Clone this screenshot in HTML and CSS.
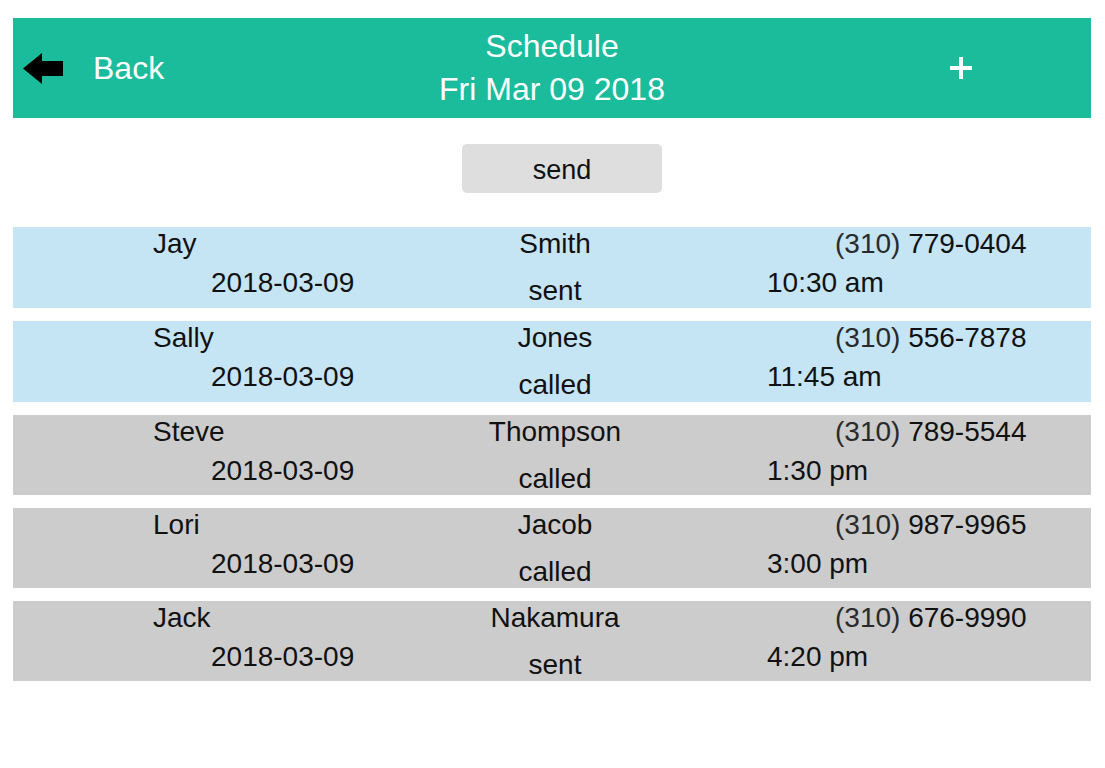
FILE: index.html
```html
<!DOCTYPE html>
<html>
<head>
<meta charset="utf-8">
<title>Schedule</title>
<link rel="stylesheet" href="styles.css">
</head>
<body>
<div class="app">
  <header class="topbar">
    <div class="back">
      <svg class="back-arrow" width="40" height="31" viewBox="0 0 40 31"><polygon points="0,15.5 19,0 19,8 40,8 40,23 19,23 19,31" fill="#000"/></svg>
      <span class="back-label">Back</span>
    </div>
    <div class="title">
      <div>Schedule</div>
      <div>Fri Mar 09 2018</div>
    </div>
    <div class="actions">
      <svg class="plus" width="22" height="22" viewBox="0 0 22 22"><rect x="9" y="0" width="4" height="22" fill="#fff"/><rect x="0" y="9" width="22" height="4" fill="#fff"/></svg>
    </div>
  </header>

  <div class="send-wrap">
    <button class="send">send</button>
  </div>

  <div class="list">
    <div class="row blue">
      <div class="first">Jay</div><div class="last">Smith</div><div class="phone"><span class="area">(310)</span> 779-0404</div>
      <div class="date">2018-03-09</div><div class="status">sent</div><div class="time">10:30 am</div>
    </div>
    <div class="row blue">
      <div class="first">Sally</div><div class="last">Jones</div><div class="phone"><span class="area">(310)</span> 556-7878</div>
      <div class="date">2018-03-09</div><div class="status">called</div><div class="time">11:45 am</div>
    </div>
    <div class="row gray">
      <div class="first">Steve</div><div class="last">Thompson</div><div class="phone"><span class="area">(310)</span> 789-5544</div>
      <div class="date">2018-03-09</div><div class="status">called</div><div class="time">1:30 pm</div>
    </div>
    <div class="row gray">
      <div class="first">Lori</div><div class="last">Jacob</div><div class="phone"><span class="area">(310)</span> 987-9965</div>
      <div class="date">2018-03-09</div><div class="status">called</div><div class="time">3:00 pm</div>
    </div>
    <div class="row gray">
      <div class="first">Jack</div><div class="last">Nakamura</div><div class="phone"><span class="area">(310)</span> 676-9990</div>
      <div class="date">2018-03-09</div><div class="status">sent</div><div class="time">4:20 pm</div>
    </div>
  </div>
</div>
</body>
</html>
```

FILE: styles.css
```css
html, body {
  margin: 0;
  padding: 0;
  background: #fff;
}

body {
  font-family: "Liberation Sans", Arial, sans-serif;
  color: #000;
}

.app {
  padding: 18px 14px 0 13px;
}

.topbar {
  height: 100px;
  background: #1bbc9b;
  color: #fff;
  display: grid;
  grid-template-columns: 1fr auto 1fr;
  align-items: center;
}

.back {
  display: flex;
  align-items: center;
  padding-left: 10px;
  gap: 30px;
}

.back-arrow {
  display: block;
}

.back-label {
  font-size: 32px;
  line-height: 43px;
}

.title {
  text-align: center;
  font-size: 32px;
  line-height: 43px;
}

.actions {
  display: flex;
  justify-content: flex-end;
  padding-right: 119px;
}

.plus {
  display: block;
}

.send-wrap {
  display: flex;
  justify-content: center;
  padding-left: 20px;
  margin-top: 26px;
}

.send {
  width: 200px;
  height: 49px;
  border: none;
  border-radius: 5px;
  background: #dedede;
  font-family: "Liberation Sans", Arial, sans-serif;
  font-size: 27px;
  color: #111;
  padding: 3px 0 0;
}

.list {
  margin-top: 34px;
  display: flex;
  flex-direction: column;
  gap: 13px;
}

.row {
  height: 80px;
  display: grid;
  grid-template-columns: 387px 310px 1fr;
  grid-template-rows: 33px 1fr;
  font-size: 28px;
  line-height: 32px;
  color: #111;
}

.row.blue {
  height: 81px;
  background: #c5e4f4;
}

.row.gray {
  background: #cccccc;
}

.first {
  padding: 1px 0 0 140px;
}

.last {
  padding-top: 1px;
  text-align: center;
}

.phone {
  padding: 1px 0 0 125px;
}

.area {
  color: #2a2a2a;
}

.date {
  padding: 7px 0 0 198px;
}

.status {
  padding-top: 15px;
  text-align: center;
}

.time {
  padding: 7px 0 0 57px;
}
```
